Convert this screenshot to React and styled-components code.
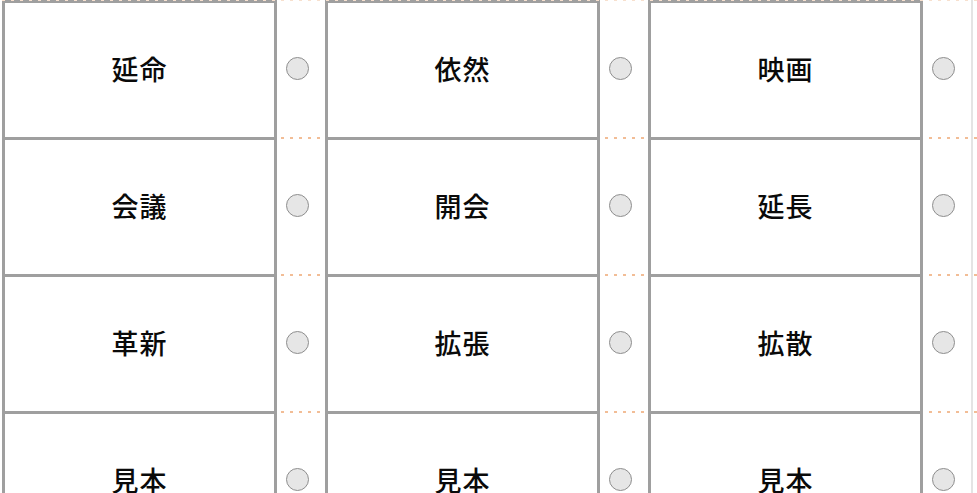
import styled, { createGlobalStyle } from "styled-components";

const GlobalStyle = createGlobalStyle`
  html, body {
    margin: 0;
    padding: 0;
    background: #ffffff;
    overflow: hidden;
  }
  body {
    font-family: "Noto Sans CJK JP", "Noto Sans", sans-serif;
  }
`;

const Sheet = styled.div`
  display: flex;
  flex-direction: column;
  padding-left: 2px;
  width: 977px;
  height: 493px;
  overflow: hidden;
  box-sizing: border-box;
`;

const Row = styled.div`
  position: relative;
  display: flex;
  flex: none;
  height: 137px;

  &::after {
    content: "";
    position: absolute;
    left: 0;
    right: 0;
    bottom: -2px;
    height: 2px;
    background: repeating-linear-gradient(
      90deg,
      #f2bd96 0 3px,
      transparent 3px 9px
    );
  }

  &:first-child::before {
    content: "";
    position: absolute;
    left: 0;
    right: 0;
    top: 0;
    height: 1px;
    background: repeating-linear-gradient(
      90deg,
      #f7e0ce 0 3px,
      transparent 3px 9px
    );
  }
`;

const Cell = styled.div`
  flex: none;
  width: 275px;
  height: 137px;
  box-sizing: border-box;
  border: 3px solid #9f9f9f;
  border-bottom: none;
  display: flex;
  align-items: center;
  justify-content: center;
  padding-bottom: 4px;
  font-size: 27px;
  font-weight: 500;
  color: #0a0a0a;
  letter-spacing: 1px;
`;

const Slot = styled.div`
  flex: none;
  width: 48px;
  display: flex;
  align-items: center;
  padding-left: 9px;
  box-sizing: border-box;
`;

const Radio = styled.span`
  width: 21px;
  height: 21px;
  border-radius: 50%;
  background: #e6e6e6;
  border: 1.5px solid #8e8e8e;
`;

const Edge = styled.div`
  flex: none;
  width: 2px;
  background: #e4e4e4;
`;

const rows = [
  ["延命", "依然", "映画"],
  ["会議", "開会", "延長"],
  ["革新", "拡張", "拡散"],
  ["見本", "見本", "見本"],
];

export default function App() {
  return (
    <>
      <GlobalStyle />
      <Sheet>
        {rows.map((words, i) => (
          <Row key={i}>
            {words.map((w, j) => (
              <>
                <Cell key={`c${j}`}>{w}</Cell>
                <Slot key={`s${j}`}>
                  <Radio />
                </Slot>
              </>
            ))}
            <Edge />
          </Row>
        ))}
      </Sheet>
    </>
  );
}
